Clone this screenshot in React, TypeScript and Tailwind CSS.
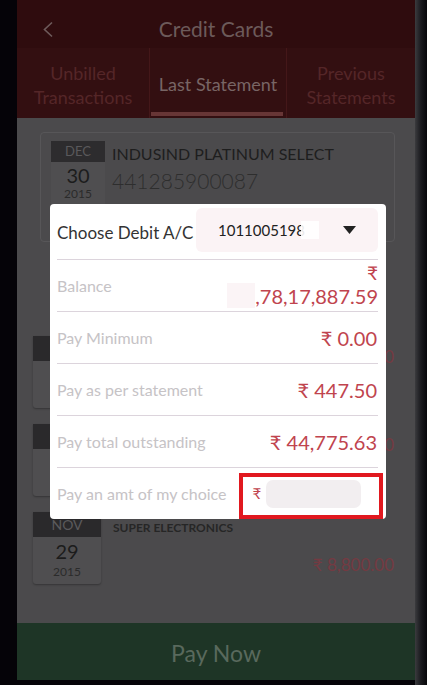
export default function App() {
  const rows = [
    { mon: "", day: "", year: "", title: "", amount: "₹ 2,100.00" },
    { mon: "", day: "", year: "", title: "", amount: "₹ 1,500.00" },
    { mon: "NOV", day: "29", year: "2015", title: "SUPER ELECTRONICS", amount: "₹ 8,800.00" },
  ]

  return (
    <div className="relative flex h-[685px] w-[427px] overflow-hidden bg-[#050308] font-['Lato',sans-serif]">
      {/* phone screen */}
      <div className="ml-[17px] flex h-[680px] w-[398px] flex-col">
        {/* title bar */}
        <div className="grid h-[48px] grid-cols-[60px_1fr_60px] items-center bg-[#2f0c0e] pt-[10px]">
          <svg className="ml-[25px]" width="12" height="17" viewBox="0 0 12 17" fill="none">
            <path d="M10 1.5 L2.5 8.5 L10 15.5" stroke="#6e5b5b" strokeWidth="1.6" />
          </svg>
          <div className="text-center text-[21px] text-[#6c5a5a]">Credit Cards</div>
          <div />
        </div>

        {/* tabs */}
        <div className="grid h-[70px] grid-cols-[133px_137px_1fr] bg-[#330f11]">
          <div className="flex items-center justify-center border-r border-[#441719] pt-[4px] text-center text-[18px] leading-[24px] text-[#552628]">
            Unbilled
            <br />
            Transactions
          </div>
          <div className="relative flex items-center justify-center border-r border-[#441719] pt-[3px] text-[18px] text-[#786565]">
            Last Statement
            <div className="absolute bottom-[2px] left-[1px] right-[3px] h-[4px] bg-[#673636]" />
          </div>
          <div className="flex items-center justify-center pt-[4px] text-center text-[18px] leading-[24px] text-[#552628]">
            Previous
            <br />
            Statements
          </div>
        </div>

        {/* content */}
        <div className="flex flex-1 flex-col bg-[#4b4a4c]">
          <div className="ml-[23px] mr-[20px] mt-[14px] flex h-[110px] gap-[7px] rounded-[4px] border border-[#575658] pl-[10px] pt-[8px]">
            <div className="flex h-[66px] w-[54px] flex-col items-center bg-[#4f4e50]">
              <div className="flex h-[21px] w-full items-center justify-center bg-[#2d2c2e] text-[13px] text-[#5a595b]">DEC</div>
              <div className="text-[20px] leading-[26px] text-[#1c1c1c]">30</div>
              <div className="text-[12px] leading-[12px] text-[#2b2b2b]">2015</div>
            </div>
            <div className="flex flex-col">
              <div className="text-[16px] leading-[26px] text-[#1e1e1e]">INDUSIND PLATINUM SELECT</div>
              <div className="text-[21px] font-light leading-[28px] text-[#2e2e2e]">441285900087</div>
            </div>
          </div>

          <div className="mt-[94px] flex flex-col">
            {rows.map((r, i) => (
              <div key={i} className="flex h-[88px] pl-[16px] pr-[21px]">
                <div className="flex h-[72px] w-[68px] flex-col items-center rounded-b-[3px] bg-[#4f4e50] shadow-[0_1px_2px_rgba(0,0,0,0.3)]">
                  <div className="flex h-[25px] w-full items-center justify-center bg-[#2a292b] text-[14px] text-[#5b5a5c]">{r.mon}</div>
                  <div className="text-[20px] leading-[28px] text-[#1c1c1c]">{r.day}</div>
                  <div className="text-[12px] leading-[14px] text-[#2b2b2b]">{r.year}</div>
                </div>
                <div className="ml-[12px] flex flex-1 flex-col">
                  <div className="text-[12px] font-bold leading-[32px] text-[#262626]">{r.title}</div>
                  <div className="mt-[8px] text-right text-[17px] text-[#743a42]">{r.amount}</div>
                </div>
              </div>
            ))}
          </div>
        </div>

        {/* footer */}
        <div className="flex h-[57px] items-center justify-center bg-[#1e3526] pt-[3px] text-[23px] text-[#59695d]">Pay Now</div>
      </div>

      {/* phone edge */}
      <div className="h-[685px] w-[12px] bg-gradient-to-r from-[#3b3b3e] via-[#1a1a1e] to-[#07070a]" />

      {/* modal */}
      <div className="absolute left-[50px] top-[204px] flex h-[315px] w-[336px] flex-col rounded-[4px] bg-white pl-[7px] pr-[8px]">
        <div className="flex h-[56px] items-start justify-between border-b border-[#dcd4dc] pt-[4px]">
          <div className="mt-[12px] whitespace-nowrap text-[17px] text-[#333]">Choose Debit A/C</div>
          <div className="flex h-[44px] w-[182px] items-center rounded-[6px] bg-[#fbf3f5] pl-[22px] pr-[22px]">
            <span className="text-[15px] text-[#222]">1011005198</span>
            <span className="ml-[-4px] h-[18px] w-[18px] bg-white/90" />
            <svg className="ml-auto" width="13" height="8" viewBox="0 0 13 8">
              <path d="M0 0 H13 L6.5 8 Z" fill="#222" />
            </svg>
          </div>
        </div>

        <div className="flex h-[52px] items-center justify-between border-b border-[#dcd4dc]">
          <div className="text-[16px] text-[#c6c3c6]">Balance</div>
          <div className="flex flex-col items-end">
            <div className="text-[19px] leading-[20px] text-[#c0444e]">₹</div>
            <div className="flex items-center">
              <span className="h-[25px] w-[28px] bg-[#fbf4f6]" />
              <span className="text-[20px] leading-[26px] text-[#c0444e]">,78,17,887.59</span>
            </div>
          </div>
        </div>

        {[
          ["Pay Minimum", "₹ 0.00"],
          ["Pay as per statement", "₹ 447.50"],
          ["Pay total outstanding", "₹ 44,775.63"],
        ].map(([label, value]) => (
          <div key={label} className="flex h-[52px] items-center justify-between border-b border-[#dcd4dc]">
            <div className="text-[16px] text-[#c6c3c6]">{label}</div>
            <div className="pr-[1px] text-[20px] text-[#c0444e]">{value}</div>
          </div>
        ))}

        <div className="flex flex-1 items-center">
          <div className="shrink-0 whitespace-nowrap text-[16px] text-[#c6c3c6]">Pay an amt of my choice</div>
          <div className="ml-[26px] text-[15px] text-[#c0444e]">₹</div>
          <div className="ml-[5px] h-[28px] w-[95px] rounded-[7px] bg-[#f2eef0]" />
        </div>

        <div className="absolute left-[189px] top-[269px] h-[46px] w-[144px] border-[4px] border-[#e1181f]" />
      </div>
    </div>
  )
}
